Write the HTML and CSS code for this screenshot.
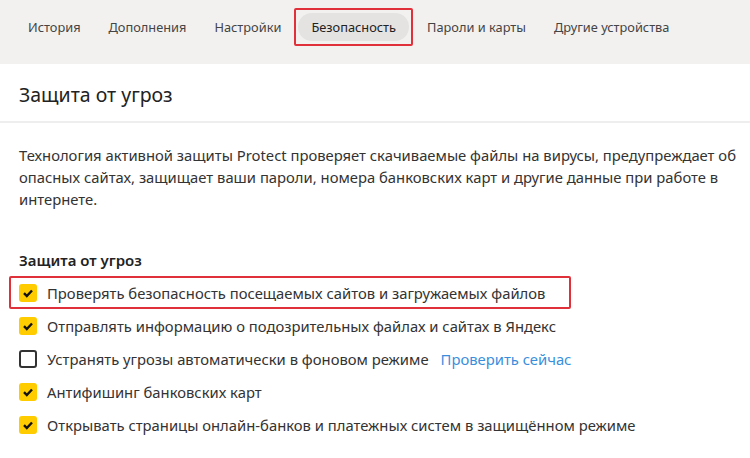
FILE: index.html
```html
<!DOCTYPE html>
<html lang="ru">

<head>
    <meta charset="UTF-8">
    <meta name="viewport" content="width=device-width, initial-scale=1.0">
    <title>Безопасность</title>
    <link rel="stylesheet" href="styles.css">
</head>

<body>
    <nav class="tabs">
        <a class="tab">История</a>
        <a class="tab">Дополнения</a>
        <a class="tab">Настройки</a>
        <span class="tab-mark"><a class="tab active">Безопасность</a></span>
        <a class="tab">Пароли и карты</a>
        <a class="tab">Другие устройства</a>
    </nav>

    <header class="page-head">
        <h1>Защита от угроз</h1>
    </header>

    <main class="content">
        <p class="intro">Технология активной защиты Protect проверяет скачиваемые файлы на вирусы, предупреждает об опасных сайтах, защищает ваши пароли, номера банковских карт и другие данные при работе в интернете.</p>

        <h2>Защита от угроз</h2>

        <ul class="options">
            <li class="option marked">
                <span class="box checked"></span>
                Проверять безопасность посещаемых сайтов и загружаемых файлов
            </li>
            <li class="option">
                <span class="box checked"></span>
                Отправлять информацию о подозрительных файлах и сайтах в Яндекс
            </li>
            <li class="option">
                <span class="box"></span>
                Устранять угрозы автоматически в фоновом режиме
                <a class="link">Проверить сейчас</a>
            </li>
            <li class="option">
                <span class="box checked"></span>
                Антифишинг банковских карт
            </li>
            <li class="option">
                <span class="box checked"></span>
                Открывать страницы онлайн-банков и платежных систем в защищённом режиме
            </li>
        </ul>
    </main>
</body>

</html>
```

FILE: styles.css
```css
body {
    margin: 0;
    font-family: "Noto Sans", "Open Sans", sans-serif;
    color: #222;
    background: #fff;
}

.tabs {
    display: flex;
    align-items: center;
    height: 64px;
    padding: 0 0 10px 14px;
    box-sizing: border-box;
    background: #f2f1f0;
}

.tab {
    font-size: 12.8px;
    color: #444;
    padding: 5px 14px;
    border-radius: 14px;
}

.tab-mark {
    display: flex;
    padding: 3px 2px;
    margin: 0 0 0 -1px;
    border: 2px solid #e0303a;
    border-radius: 2px;
}

.tab.active {
    background: #e4e3e2;
    color: #222;
    padding: 5px 13px;
}

.page-head {
    border-bottom: 2px solid #eeeeee;
    padding: 19px 19px 14px;
}

h1 {
    margin: 0;
    font-size: 19.5px;
    font-weight: 400;
    line-height: 24px;
}

.content {
    padding: 21px 4px 0 19px;
}

.intro {
    margin: 0;
    font-size: 14.8px;
    line-height: 22px;
    color: #333;
}

h2 {
    margin: 40px 0 6px;
    font-size: 15px;
    font-weight: 600;
    line-height: 20px;
}

.options {
    list-style: none;
    margin: 0 0 0 -10px;
    padding: 0;
}

.option {
    display: flex;
    align-items: center;
    gap: 10px;
    width: 562px;
    height: 33px;
    padding-left: 10px;
    box-sizing: border-box;
    font-size: 14.8px;
    color: #333;
    white-space: nowrap;
}

.option.marked {
    border: 2px solid #e0303a;
    border-radius: 2px;
    padding-left: 8px;
}

.box {
    width: 14px;
    height: 14px;
    border: 2px solid #333;
    border-radius: 3px;
    flex: none;
}

.box.checked {
    width: 18px;
    height: 18px;
    border: none;
    background: #ffcc00 url("data:image/svg+xml,%3Csvg xmlns='http://www.w3.org/2000/svg' viewBox='0 0 18 18'%3E%3Cpath d='M5 9.2l2.8 2.8L13 6.5' fill='none' stroke='%23111' stroke-width='2.4'/%3E%3C/svg%3E") center / 18px no-repeat;
}

.link {
    color: #3a8fdc;
    margin-left: 2px;
}
```
